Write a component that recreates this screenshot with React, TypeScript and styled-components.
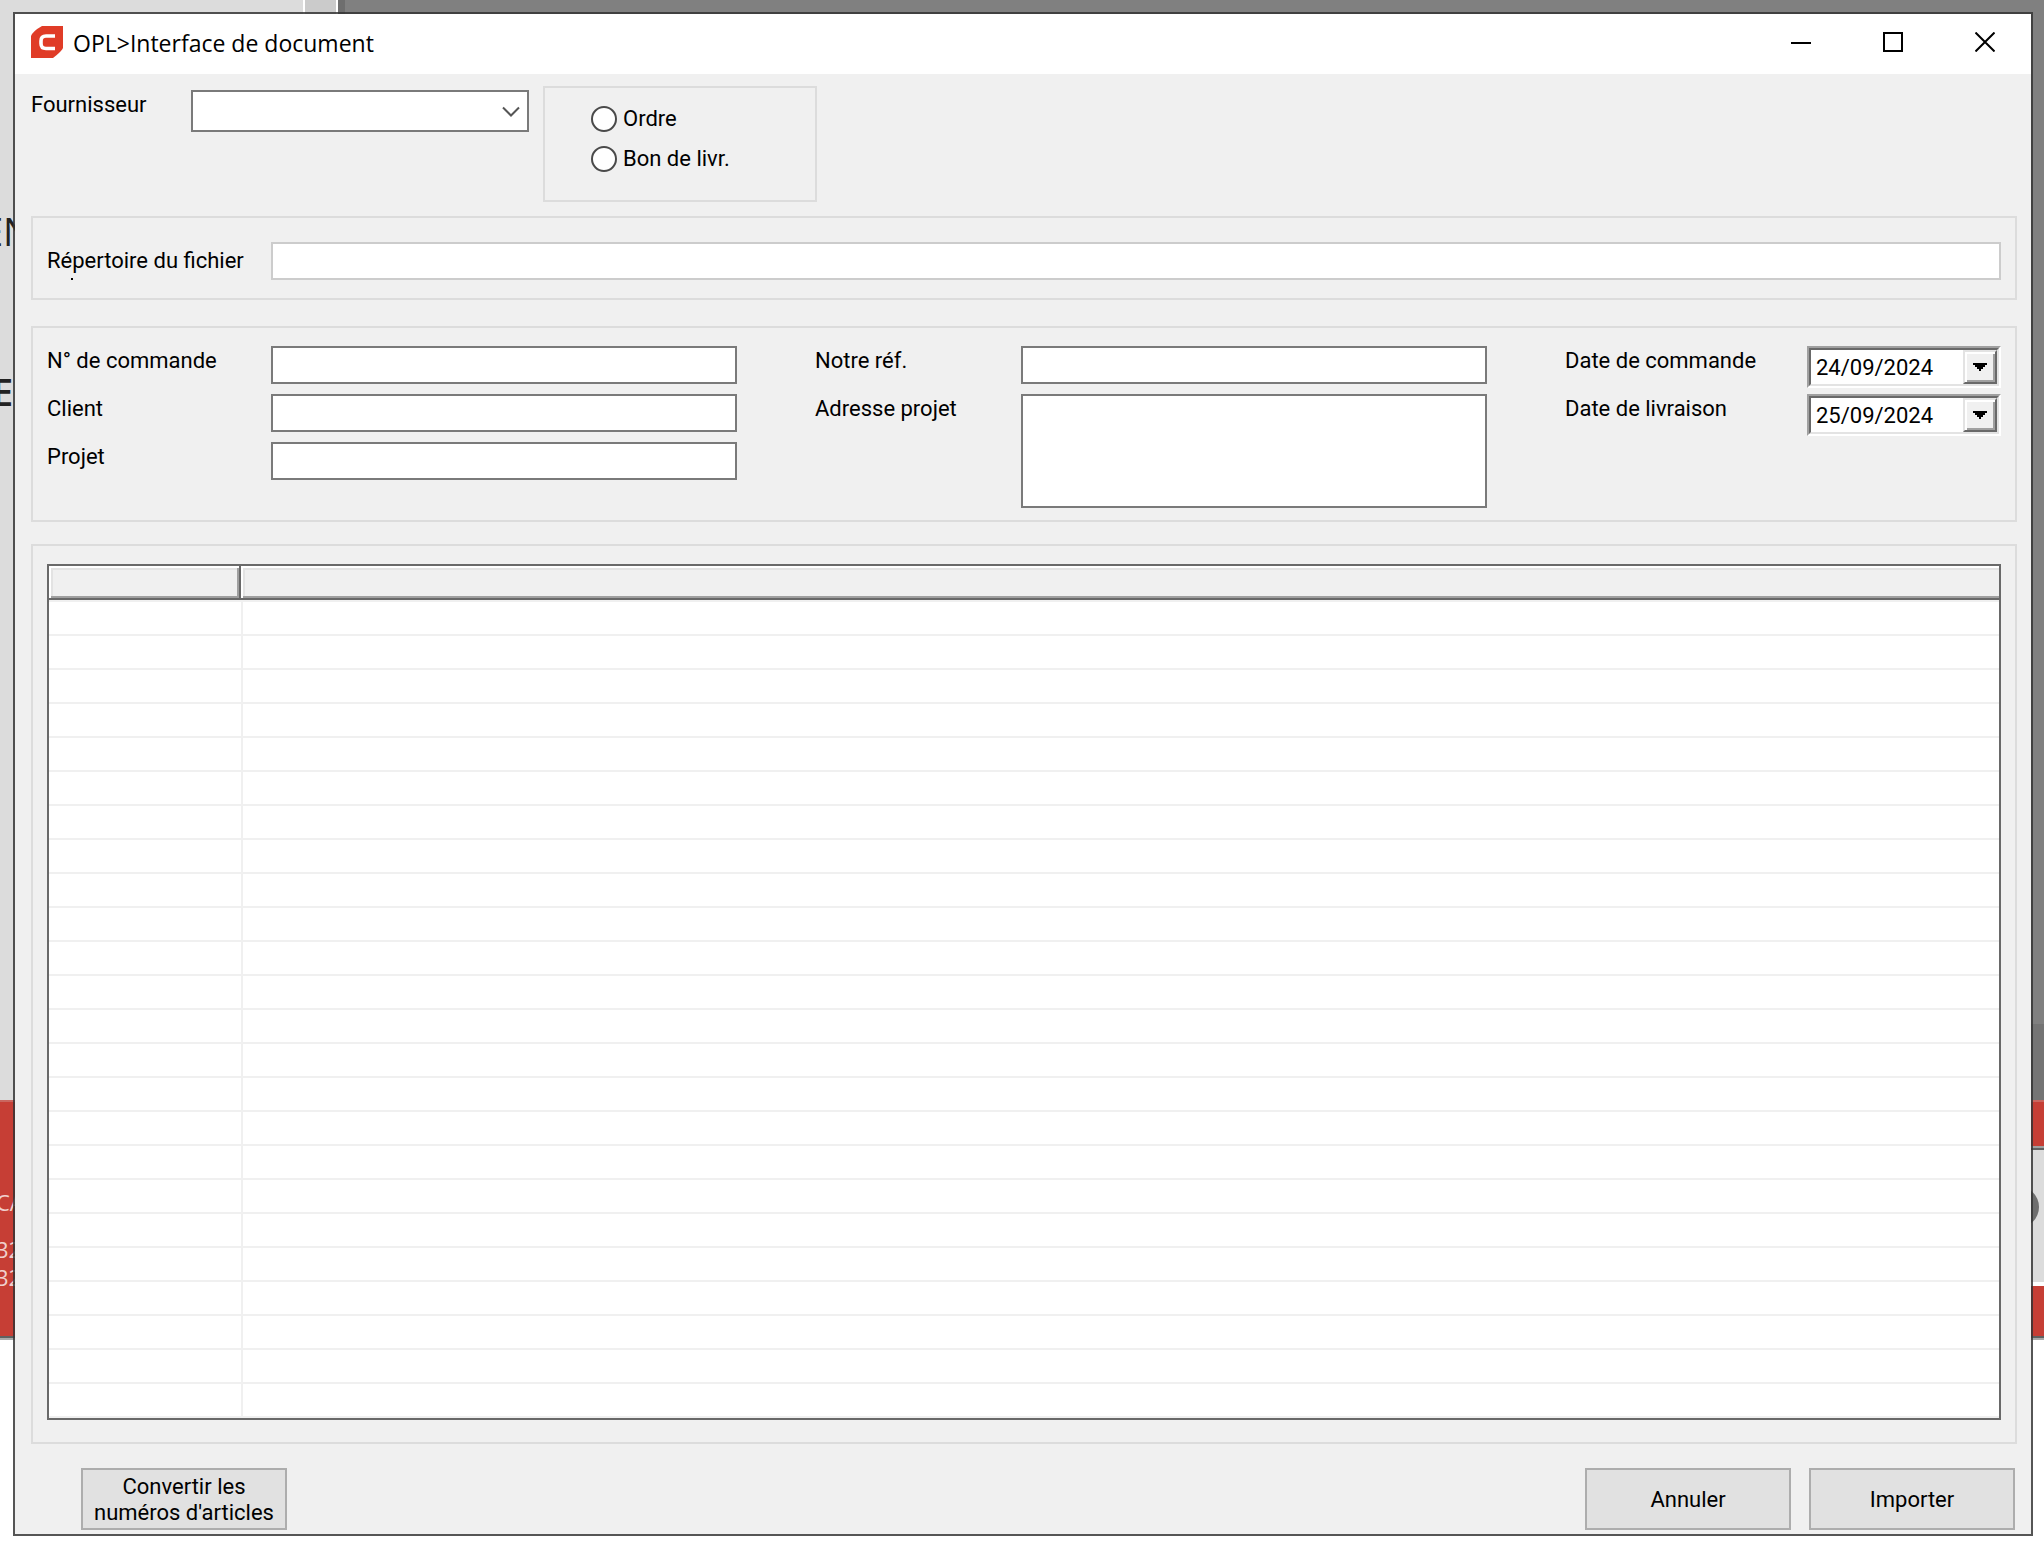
import React, { useState } from "react";
import styled, { createGlobalStyle, css } from "styled-components";

const color = {
  face: "#f0f0f0",
  groupLine: "#dcdcdc",
  fieldLine: "#7a7a7a",
  disabledLine: "#cccccc",
  dark: "#696969",
  shadow: "#a0a0a0",
  light: "#e3e3e3",
  red: "#c63e35",
  brand: "#e03c27",
};

const GlobalStyle = createGlobalStyle`
  *, *::before, *::after { box-sizing: border-box; }
  body {
    margin: 0;
    background: #fff;
    color: #000;
    font: 22px/30px Roboto, "Liberation Sans", Arial, sans-serif;
  }
  input, select, textarea, button { font: inherit; color: inherit; margin: 0; border-radius: 0; }
`;

const Desktop = styled.div`
  display: grid;
  grid-template: minmax(100vh, auto) / minmax(0, 1fr);
  overflow: hidden;
`;

/* Application behind the dialog */

const Backdrop = styled.div`
  grid-area: 1 / 1;
  display: flex;
  flex-direction: column;
  font-family: "Open Sans", "Noto Sans", sans-serif;
`;

const BackdropMain = styled.div`
  display: flex;
  height: 1102px;
  background: linear-gradient(#808080 1024px, #747474 1024px);
  border-bottom: 2px solid #c9665f;
`;

const SidePane = styled.div`
  width: 305px;
  padding-top: 206px;
  background: #dcdcdc;
  border-right: 2px solid #fff;
  overflow: hidden;
`;

const Splitter = styled.div`
  width: 40px;
  background: #cbcbcb;
  border-right: 7px solid #6e6e6e;
  box-shadow: inset -2px 0 #fff;
`;

const SideText = styled.div<{ $bold?: boolean }>`
  height: 160px;
  margin-left: ${(p) => (p.$bold ? "-8px" : "-18px")};
  font-size: 38px;
  line-height: 50px;
  font-weight: ${(p) => (p.$bold ? 600 : 400)};
  color: #222;
`;

const StatusBar = styled.div`
  display: flex;
  justify-content: space-between;
  height: 238px;
  background: ${color.red};
  border-bottom: 2px solid #aaa;
  box-shadow: inset 0 -2px #606060;
`;

const Contact = styled.div`
  margin-left: -4px;
  padding-top: 86px;
  font-size: 22px;
  line-height: 28px;
  color: #f0d0cd;
`;

const ContactName = styled.div`
  margin-bottom: 19px;
`;

const StatusCard = styled.div`
  display: flex;
  align-items: center;
  justify-content: flex-end;
  width: 60px;
  height: 140px;
  margin-top: 44px;
  padding: 0 5px 16px 0;
  background: #dcdcdc;
  border-top: 2px solid ${color.shadow};
  border-bottom: 4px solid #fff;
  box-shadow: inset 0 2px #606060;
`;

const Knob = styled.span`
  width: 42px;
  height: 42px;
  border-radius: 50%;
  background: #6e6e6e;
`;

/* Dialog frame */

const Dialog = styled.main`
  grid-area: 1 / 1;
  align-self: start;
  margin: 12px 11px 18px 13px;
  border: 2px solid rgba(50, 50, 50, 0.83);
  background: ${color.face};
  background-clip: padding-box;
  z-index: 1;
`;

const TitleBar = styled.header`
  display: flex;
  align-items: center;
  height: 60px;
  padding-left: 16px;
  background: #fff;
`;

const Logo = styled.svg`
  width: 32px;
  height: 32px;
  margin-bottom: 4px;
`;

const Title = styled.h1`
  flex: 1;
  margin: 0 0 2px 10px;
  font: 400 23px/32px "Open Sans", "Noto Sans", sans-serif;
`;

const CaptionButton = styled.button`
  display: grid;
  place-items: center;
  width: 92px;
  height: 60px;
  padding: 0 0 4px;
  border: 0;
  background: transparent;
  &:hover { background: #e5e5e5; }
`;

const Glyph = styled.svg`
  width: 20px;
  height: 20px;
  fill: none;
  stroke: #000;
  stroke-width: 2;
`;

const Form = styled.form`
  padding: 12px 14px 4px 16px;
`;

/* Fields */

const fieldBox = css`
  display: block;
  width: 100%;
  height: 38px;
  padding: 0 6px;
  border: 2px solid ${color.fieldLine};
  background: #fff;
  outline: none;
`;

const TextInput = styled.input`
  ${fieldBox}
  &:disabled { border-color: ${color.disabledLine}; }
`;

const TextArea = styled.textarea`
  ${fieldBox}
  height: 114px;
  resize: none;
`;

const TopRow = styled.div`
  display: flex;
  align-items: flex-start;
  gap: 14px;
  margin-bottom: 14px;
`;

const Supplier = styled.div`
  display: grid;
  grid-template-columns: 160px 338px;
  padding-top: 4px;
`;

const SelectWrap = styled.div`
  position: relative;
`;

const Select = styled.select`
  ${fieldBox}
  height: 42px;
  appearance: none;
`;

const Chevron = styled.svg`
  position: absolute;
  right: 9px;
  top: 16px;
  width: 18px;
  height: 12px;
  fill: none;
  stroke: #555;
  stroke-width: 2;
  pointer-events: none;
`;

const RadioGroup = styled.fieldset`
  display: flex;
  flex-direction: column;
  gap: 10px;
  width: 274px;
  margin: 0;
  padding: 16px 0 26px 46px;
  border: 2px solid ${color.groupLine};
`;

const RadioLabel = styled.label`
  display: flex;
  align-items: center;
  gap: 6px;
`;

const Radio = styled.input`
  appearance: none;
  width: 26px;
  height: 26px;
  border: 2px solid #4a4a4a;
  border-radius: 50%;
  background: #fff;
  &:checked { box-shadow: inset 0 0 0 5px #fff; background: #333; }
`;

const Group = styled.section<{ $pad: string; $after: number }>`
  margin-bottom: ${(p) => p.$after}px;
  padding: ${(p) => p.$pad};
  border: 2px solid ${color.groupLine};
`;

const FileRow = styled.div`
  display: grid;
  grid-template-columns: 224px minmax(0, 1fr);
`;

const ClippedLabel = styled.label`
  padding-top: 4px;
  &::after {
    content: "";
    display: block;
    width: 2px;
    height: 2px;
    margin: 2px 0 0 24px;
    background: #000;
  }
`;

const Columns = styled.div`
  display: flex;
  align-items: flex-start;
  gap: 78px;
`;

const FieldColumn = styled.div<{ $label: number; $field?: number }>`
  flex: ${(p) => (p.$field ? `0 0 ${p.$label + p.$field}px` : `1 1 ${p.$label}px`)};
  display: grid;
  grid-template-columns: ${(p) => p.$label}px minmax(0, 1fr);
  row-gap: ${(p) => (p.$field ? 6 : 10)}px;
`;

const DateBox = styled.div`
  display: flex;
  height: 42px;
  border: 2px solid;
  border-color: ${color.shadow} #fff #fff ${color.shadow};
  background: #fff;
`;

const DateInner = styled.div`
  display: flex;
  width: 100%;
  border: 2px solid;
  border-color: ${color.dark} ${color.light} ${color.light} ${color.dark};
`;

const DateInput = styled.input`
  flex: 1;
  min-width: 0;
  padding: 2px 0 0 5px;
  border: 0;
  outline: none;
  background: transparent;
`;

const DropButton = styled.button`
  display: grid;
  place-items: center;
  width: 34px;
  padding: 0;
  border: 2px solid;
  border-color: ${color.light} ${color.dark} ${color.dark} ${color.light};
  background: ${color.face};
  box-shadow: inset 2px 2px #fff, inset -2px -2px ${color.shadow};
`;

/* Article grid */

const ArticleTable = styled.table`
  width: 100%;
  table-layout: fixed;
  border-collapse: separate;
  border-spacing: 0;
  border: 2px solid ${color.dark};
  background: #fff;
`;

const HeadCell = styled.th<{ $last?: boolean }>`
  width: ${(p) => (p.$last ? "auto" : "192px")};
  height: 34px;
  padding: 0;
  background: ${color.face};
  box-shadow: ${(p) => (p.$last ? "" : `inset -2px 0 ${color.dark},`)} inset 0 -2px ${color.dark},
    inset 2px 2px #fff, ${(p) => (p.$last ? "" : `inset -4px 0 ${color.shadow},`)}
    inset 0 -4px ${color.shadow}, inset 4px 4px ${color.light};
`;

const BodyRow = styled.tr`
  & > td {
    height: 34px;
    padding: 0;
    border-bottom: 2px solid ${color.face};
  }
  & > td + td { border-left: 2px solid ${color.face}; }
  &:first-child > td { height: 36px; border-top: 2px solid ${color.face}; }
`;

const Footer = styled.footer`
  display: flex;
  gap: 18px;
  padding: 0 2px 0 50px;
`;

const PushButton = styled.button<{ $start?: boolean }>`
  width: 206px;
  height: 62px;
  padding: 2px 6px 0;
  margin-right: ${(p) => (p.$start ? "auto" : "0")};
  border: 2px solid #adadad;
  background: #e1e1e1;
  line-height: 26px;
`;

const ROWS = Array.from({ length: 24 }, (_, i) => i);

function DateField({ id, initial }: { id: string; initial: string }) {
  const [value, setValue] = useState(initial);
  return (
    <DateBox>
      <DateInner>
        <DateInput id={id} value={value} onChange={(e) => setValue(e.target.value)} />
        <DropButton type="button" aria-label="Calendrier">
          <svg width="14" height="8" viewBox="0 0 14 8" aria-hidden="true">
            <path d="M0 0H14V2H12V4H10V6H8V8H6V6H4V4H2V2H0Z" fill="#000" />
          </svg>
        </DropButton>
      </DateInner>
    </DateBox>
  );
}

export default function App() {
  return (
    <Desktop>
      <GlobalStyle />
      <Backdrop aria-hidden="true">
        <BackdropMain>
          <SidePane>
            <SideText>EN</SideText>
            <SideText $bold>E</SideText>
          </SidePane>
          <Splitter />
        </BackdropMain>
        <StatusBar>
          <Contact>
            <ContactName>CA</ContactName>
            <div>32</div>
            <div>32</div>
          </Contact>
          <StatusCard>
            <Knob />
          </StatusCard>
        </StatusBar>
      </Backdrop>

      <Dialog>
        <TitleBar>
          <Logo viewBox="0 0 32 32" aria-hidden="true">
            <path d="M11 0H32V22Q31 25 22 32H0V10Q2 5 11 0Z" fill={color.brand} />
            <path
              d="M24 10H15Q10 10 10 15V17.500Q10 22.500 15 22.500H24"
              fill="none"
              stroke="#fff"
              strokeWidth="3.600"
            />
          </Logo>
          <Title>OPL&gt;Interface de document</Title>
          <CaptionButton type="button" aria-label="Réduire">
            <Glyph viewBox="0 0 20 20"><path d="M0 11H20" /></Glyph>
          </CaptionButton>
          <CaptionButton type="button" aria-label="Agrandir">
            <Glyph viewBox="0 0 20 20"><path d="M1 1H19V19H1Z" /></Glyph>
          </CaptionButton>
          <CaptionButton type="button" aria-label="Fermer">
            <Glyph viewBox="0 0 20 20"><path d="M0.500 0.500L19.500 19.500M19.500 0.500L0.500 19.500" /></Glyph>
          </CaptionButton>
        </TitleBar>

        <Form onSubmit={(e) => e.preventDefault()}>
          <TopRow>
            <Supplier>
              <label htmlFor="supplier">Fournisseur</label>
              <SelectWrap>
                <Select id="supplier" defaultValue="">
                  <option value="" />
                </Select>
                <Chevron viewBox="0 0 18 12" aria-hidden="true">
                  <path d="M1 1.500L9 9.500L17 1.500" />
                </Chevron>
              </SelectWrap>
            </Supplier>
            <RadioGroup>
              <RadioLabel>
                <Radio type="radio" name="kind" value="order" />
                Ordre
              </RadioLabel>
              <RadioLabel>
                <Radio type="radio" name="kind" value="delivery" />
                Bon de livr.
              </RadioLabel>
            </RadioGroup>
          </TopRow>

          <Group $pad="24px 14px 18px" $after={26}>
            <FileRow>
              <ClippedLabel htmlFor="path">Répertoire du fichier</ClippedLabel>
              <TextInput id="path" disabled />
            </FileRow>
          </Group>

          <Group $pad="18px 14px 12px" $after={22}>
            <Columns>
              <FieldColumn $label={224}>
                <label htmlFor="order-no">N° de commande</label>
                <TextInput id="order-no" />
                <label htmlFor="client">Client</label>
                <TextInput id="client" />
                <label htmlFor="project">Projet</label>
                <TextInput id="project" />
              </FieldColumn>
              <FieldColumn $label={206}>
                <label htmlFor="our-ref">Notre réf.</label>
                <TextInput id="our-ref" />
                <label htmlFor="address">Adresse projet</label>
                <TextArea id="address" />
              </FieldColumn>
              <FieldColumn $label={242} $field={194}>
                <label htmlFor="order-date">Date de commande</label>
                <DateField id="order-date" initial="24/09/2024" />
                <label htmlFor="delivery-date">Date de livraison</label>
                <DateField id="delivery-date" initial="25/09/2024" />
              </FieldColumn>
            </Columns>
          </Group>

          <Group $pad="18px 14px 22px" $after={24}>
            <ArticleTable>
              <thead>
                <tr>
                  <HeadCell scope="col" />
                  <HeadCell scope="col" $last />
                </tr>
              </thead>
              <tbody>
                {ROWS.map((row) => (
                  <BodyRow key={row}>
                    <td />
                    <td />
                  </BodyRow>
                ))}
              </tbody>
            </ArticleTable>
          </Group>

          <Footer>
            <PushButton type="button" $start>Convertir les numéros d'articles</PushButton>
            <PushButton type="button">Annuler</PushButton>
            <PushButton type="submit">Importer</PushButton>
          </Footer>
        </Form>
      </Dialog>
    </Desktop>
  );
}
